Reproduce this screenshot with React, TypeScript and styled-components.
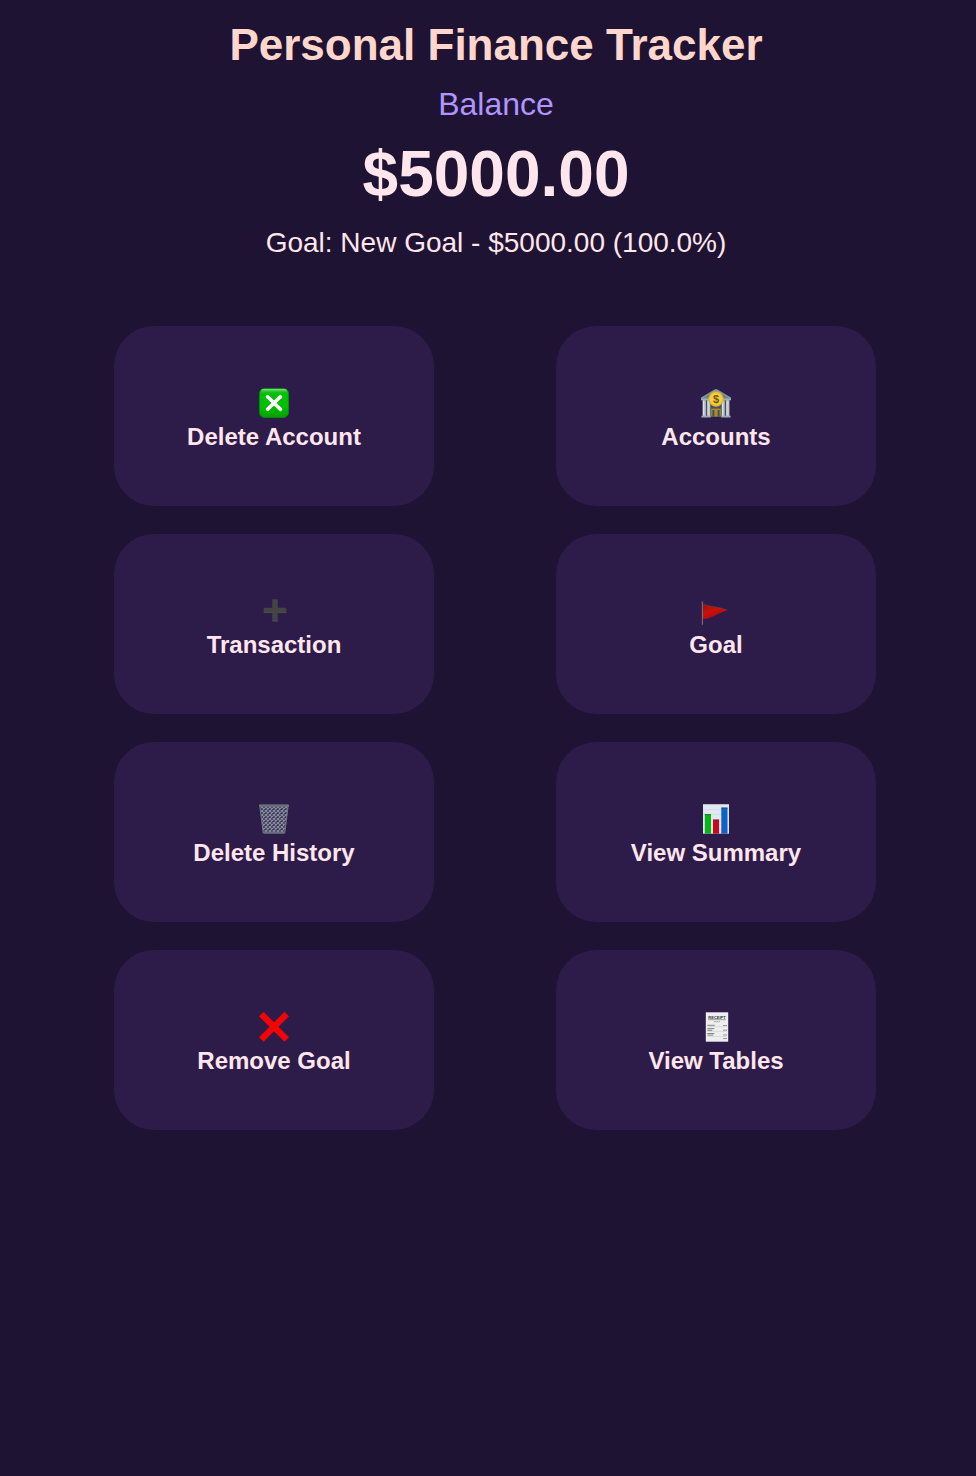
import React from "react";
import styled, { createGlobalStyle } from "styled-components";

const GlobalStyle = createGlobalStyle`
  *, *::before, *::after { box-sizing: border-box; }
  body {
    margin: 0;
    background: #1e1332;
    color: #ffe6ec;
    font-family: "Liberation Sans", Arial, Helvetica, sans-serif;
  }
`;

const Page = styled.main`
  min-height: 100vh;
  padding: 20px 0 20px 14px;
`;

const Header = styled.header`
  display: flex;
  flex-direction: column;
  align-items: center;
  gap: 16px;
  margin-bottom: 66px;
  padding: 0 14px 0 16px;
  text-align: center;
`;

const Title = styled.h1`
  margin: 0;
  color: #ffd6cc;
  font-size: 44px;
  line-height: 50px;
`;

const Subtitle = styled.h2`
  margin: 0;
  color: #b094ff;
  font-size: 32px;
  font-weight: 400;
  line-height: 36px;
`;

const Amount = styled.p`
  margin: 0;
  font-size: 64px;
  font-weight: 700;
  line-height: 72px;
`;

const GoalText = styled.p`
  margin: 0;
  font-size: 28px;
  line-height: 34px;
`;

const Actions = styled.nav`
  display: grid;
  grid-template-columns: repeat(2, minmax(0, 320px));
  justify-content: center;
  gap: 28px 122px;
`;

const ActionButton = styled.button`
  display: flex;
  flex-direction: column;
  align-items: center;
  justify-content: center;
  gap: 4px;
  min-height: 180px;
  padding: 6px 0 0;
  border: 0;
  border-radius: 40px;
  background: #2d1b4a;
  color: inherit;
  font-family: inherit;
  font-size: 24px;
  font-weight: 700;
  line-height: 28px;
  cursor: pointer;

  &:hover { background: #38225b; }
`;

const Icon = styled.svg.attrs({ viewBox: "0 0 32 32", "aria-hidden": true })`
  display: block;
  width: 32px;
  height: 32px;
`;

const CrossBoxIcon = () => (
  <Icon>
    <defs>
      <linearGradient id="box" x1="0" y1="0" x2="0" y2="1">
        <stop offset="0" stopColor="#35bd3b" />
        <stop offset="0.2" stopColor="#00c000" />
        <stop offset="0.65" stopColor="#00bd00" />
        <stop offset="1" stopColor="#00a000" />
      </linearGradient>
      <linearGradient id="shine" x1="0" y1="0" x2="0" y2="1">
        <stop offset="0" stopColor="#8ce08c" />
        <stop offset="1" stopColor="#00c000" stopOpacity="0" />
      </linearGradient>
    </defs>
    <rect x="1.4" y="1.4" width="29.2" height="29.2" rx="5.6" fill="url(#box)" stroke="#078d12" strokeWidth="0.8" />
    <rect x="2.8" y="2" width="26.4" height="4.5" rx="3" fill="url(#shine)" />
    <path d="M9.6 9.7 22.4 22.3M22.4 9.7 9.6 22.3" stroke="#fff" strokeWidth="3.7" strokeLinecap="round" />
  </Icon>
);

const BankIcon = () => (
  <Icon>
    <path d="M3 12h26v17H3z" fill="#46525f" />
    <path d="M1 10.5 15 2.3h2l14 8.2v2H1z" fill="#84979d" />
    <path d="M4 10.5 16 4l12 6.5z" fill="#657981" />
    <path d="M1 11.8h30v1.5H1z" fill="#a4b0b4" />
    <path d="M2.6 13.2h3.2v16H2.6zM7.3 13.2h3v16h-3zM21.7 13.2h3v16h-3zM26.2 13.2h3.2v16h-3.2z" fill="#bdc8ce" />
    <path d="M3.5 13.5v15M8 13.5v15M22.5 13.5v15M27 13.5v15" stroke="#e1e6e9" strokeWidth="0.8" />
    <path d="M11.2 21.6h9.6v8.1h-9.6z" fill="#b58a22" />
    <path d="M12.4 23h2v6.7h-2zM17.6 23h2v6.7h-2z" fill="#37556a" />
    <path d="M1.4 28.8h9.4v1.6H1.4zM21.2 28.8h9.4v1.6h-9.4z" fill="#9eabb0" />
    <circle cx="16" cy="12" r="7.4" fill="#f1ba20" stroke="#cfae42" strokeWidth="0.6" />
    <circle cx="16" cy="12" r="6" fill="#f7cf40" />
    <text x="16" y="15.8" textAnchor="middle" fontSize="11" fill="#705712">$</text>
  </Icon>
);

const PlusIcon = () => (
  <Icon>
    <path d="M14.3 4.2h5.5v8.6h8.5v5.3h-8.5v8.3h-5.5v-8.3H5.7v-5.3h8.6z" fill="#444445" />
    <path d="M5.7 17.6h8.6M19.8 17.6h8.5M14.3 25.9h5.5" stroke="#4c4c4e" />
  </Icon>
);

const FlagIcon = () => (
  <Icon>
    <defs>
      <linearGradient id="flag" x1="0" y1="0" x2="0.6" y2="1">
        <stop offset="0" stopColor="#960d0d" />
        <stop offset="0.5" stopColor="#cc110c" />
        <stop offset="1" stopColor="#a90707" />
      </linearGradient>
    </defs>
    <path d="M3 8.4C8 12.2 16 10.6 27.8 15.4 18.5 17 13.5 23.4 3 24.2z" fill="url(#flag)" />
    <path d="M3.5 9C8 12 16 10.8 26.5 15" fill="none" stroke="#85443f" strokeWidth="0.6" />
    <path d="M2.4 7v22.7" stroke="#747078" strokeWidth="1.1" />
    <circle cx="2.4" cy="7.2" r="0.9" fill="#59616e" />
  </Icon>
);

const TrashIcon = () => (
  <Icon>
    <defs>
      <pattern id="mesh" width="4" height="4" patternUnits="userSpaceOnUse">
        <path d="M0 0 4 4M4 0 0 4" stroke="#858c9e" strokeWidth="1.2" />
      </pattern>
    </defs>
    <path d="M1.8 3h28.4l-3.4 27H5.2z" fill="#3a3152" />
    <path d="M1.8 3h28.4l-3.4 27H5.2z" fill="url(#mesh)" stroke="#6c747e" strokeWidth="1" />
    <path d="M2 2.4h28" stroke="#7d878c" strokeWidth="1.9" strokeLinecap="round" />
    <path d="M2.5 2.8h27" stroke="#4b5360" strokeWidth="0.6" />
    <path d="M6.2 29.6h19.6" stroke="#697079" strokeWidth="1.8" strokeLinecap="round" />
  </Icon>
);

const ChartIcon = () => (
  <Icon>
    <path d="M3 1.3h26v29.4H3z" fill="#e1e8f0" />
    <path d="M3 1.7h26M3 6.5h26M3 11.5h26M3 16.5h26M3 21.5h26M3 26.5h26" stroke="#cbd6df" strokeWidth="0.5" />
    <path d="M4.8 11.2H11v19.5H4.8z" fill="#08b516" />
    <path d="M13 16.7h6.1v14H13z" fill="#c70b1d" />
    <path d="M21.3 4.7h6.2v26h-6.2z" fill="#0c63c5" />
    <path d="M4.8 11.6H11" stroke="#078923" />
    <path d="M13 17.1h6.1" stroke="#91192c" />
    <path d="M21.3 5.1h6.2" stroke="#164e91" />
  </Icon>
);

const CrossIcon = () => (
  <Icon>
    <path d="M3.3 3.1 28.7 28.5M28.7 3.1 3.3 28.5" stroke="#f40505" strokeWidth="6.4" />
  </Icon>
);

const ReceiptIcon = () => (
  <Icon>
    <path d="M5.8 1.3h22.4v29.4H5.8z" fill="#edeeed" />
    <text x="17" y="7.6" textAnchor="middle" fontSize="4" fontWeight="700" fill="#333438">RECEIPT</text>
    <path d="M8 8.7h18" stroke="#6b6c70" strokeWidth="0.6" />
    <path d="M14 10.7h6" stroke="#9a9b9d" strokeWidth="0.9" strokeDasharray="2 0.5" />
    <path d="M7.3 14.3h7.5M7.3 17.6h7M7.3 19.3h5M7.3 22.5h7M7.3 24.1h6" stroke="#77787b" strokeWidth="0.9" />
    <path d="M23 14.5h4M23 19.2h4M23 24h4M23 27.5h4" stroke="#808184" strokeWidth="0.8" />
    <path d="M7.3 15.6h19.4M7.3 20.5h19.4M7.3 25.5h19.4" stroke="#c9cacc" strokeWidth="0.5" />
  </Icon>
);

const actions = [
  { label: "Delete Account", Glyph: CrossBoxIcon },
  { label: "Accounts", Glyph: BankIcon },
  { label: "Transaction", Glyph: PlusIcon },
  { label: "Goal", Glyph: FlagIcon },
  { label: "Delete History", Glyph: TrashIcon },
  { label: "View Summary", Glyph: ChartIcon },
  { label: "Remove Goal", Glyph: CrossIcon },
  { label: "View Tables", Glyph: ReceiptIcon },
];

export default function App() {
  return (
    <>
      <GlobalStyle />
      <Page>
        <Header>
          <Title>Personal Finance Tracker</Title>
          <Subtitle>Balance</Subtitle>
          <Amount>$5000.00</Amount>
          <GoalText>Goal: New Goal - $5000.00 (100.0%)</GoalText>
        </Header>
        <Actions aria-label="Finance actions">
          {actions.map(({ label, Glyph }) => (
            <ActionButton key={label} type="button">
              <Glyph />
              <span>{label}</span>
            </ActionButton>
          ))}
        </Actions>
      </Page>
    </>
  );
}
